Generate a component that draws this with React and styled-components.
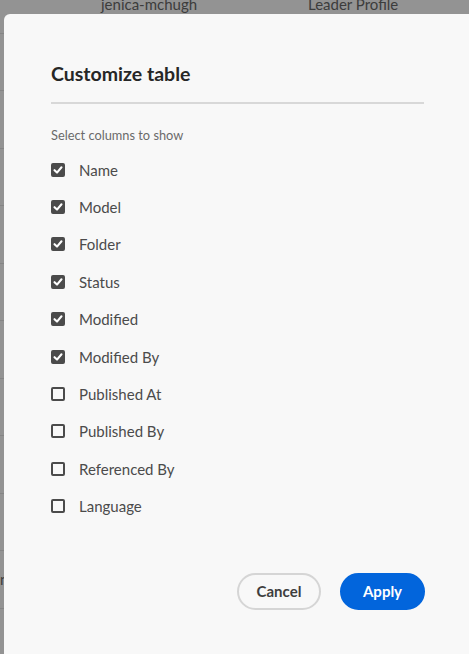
import React from "react";
import styled, { createGlobalStyle } from "styled-components";

const Global = createGlobalStyle`
  html, body { margin: 0; padding: 0; }
  body {
    width: 469px;
    height: 654px;
    overflow: hidden;
    background: #929292;
    font-family: Lato, "Open Sans", sans-serif;
  }
`;

const Page = styled.div`
  position: relative;
  width: 469px;
  height: 654px;
  overflow: hidden;
  background: #939393;
`;

const BackTable = styled.div`
  display: flex;
  flex-direction: column;
  margin-top: -24px;
`;

const BackRow = styled.div`
  height: 57.5px;
  box-sizing: border-box;
  border-bottom: 1px solid #858585;
  display: flex;
  align-items: center;
  font-size: 15px;
  color: #3c3c3c;
`;

const BackCell = styled.span`
  width: ${(p) => p.$w}px;
  flex: none;
  white-space: nowrap;
`;

const Dialog = styled.section`
  position: absolute;
  left: 4px;
  top: 14px;
  width: 468px;
  height: 660px;
  box-sizing: border-box;
  background: #f8f8f8;
  border-radius: 6px 0 0 0;
  padding: 47px 47px 0 47px;
  display: flex;
  flex-direction: column;
`;

const Title = styled.h2`
  margin: 0;
  font-size: 19.5px;
  font-weight: 700;
  color: #262626;
  line-height: 26px;
`;

const Divider = styled.hr`
  margin: 15px 1px 0 0;
  border: none;
  height: 2px;
  background: #d8d8d8;
`;

const Label = styled.div`
  margin-top: 23px;
  font-size: 12.8px;
  color: #6a6a6a;
  line-height: 16px;
`;

const List = styled.div`
  margin-top: 8px;
  display: flex;
  flex-direction: column;
`;

const Row = styled.label`
  height: 37.4px;
  display: flex;
  align-items: center;
  gap: 14px;
  font-size: 15px;
  color: #4b4b4b;
`;

const Box = styled.span`
  width: 14px;
  height: 14px;
  box-sizing: border-box;
  border-radius: 2px;
  border: 2px solid #4b4b4b;
  background: ${(p) => (p.$on ? "#4b4b4b" : "transparent")};
  display: flex;
  align-items: center;
  justify-content: center;
  flex: none;
`;

const Footer = styled.div`
  margin-top: 48px;
  display: flex;
  justify-content: flex-end;
  gap: 19px;
`;

const Button = styled.button`
  height: 37px;
  min-width: ${(p) => p.$w}px;
  border-radius: 19px;
  box-sizing: border-box;
  font-family: Lato, "Open Sans", sans-serif;
  font-size: 15px;
  font-weight: 700;
  padding: 0 14px;
  border: 2px solid ${(p) => (p.$primary ? "#0265dc" : "#d5d5d5")};
  background: ${(p) => (p.$primary ? "#0265dc" : "transparent")};
  color: ${(p) => (p.$primary ? "#ffffff" : "#3e3e3e")};
`;

const columns = [
  ["Name", true],
  ["Model", true],
  ["Folder", true],
  ["Status", true],
  ["Modified", true],
  ["Modified By", true],
  ["Published At", false],
  ["Published By", false],
  ["Referenced By", false],
  ["Language", false],
];

const Check = () => (
  <svg width="10" height="10" viewBox="0 0 10 10">
    <path d="M1.5 5.2 L4 7.6 L8.5 2.3" fill="none" stroke="#fff" strokeWidth="2.1" strokeLinecap="round" strokeLinejoin="round" />
  </svg>
);

export default function App() {
  const rows = Array.from({ length: 13 });
  return (
    <>
      <Global />
      <Page>
        <BackTable>
          {rows.map((_, i) => (
            <BackRow key={i}>
              <BackCell $w={4}>{i === 10 ? "n" : ""}</BackCell>
              <BackCell $w={97} />
              {i === 0 ? (
                <>
                  <BackCell $w={207}>jenica-mchugh</BackCell>
                  <BackCell $w={150}>Leader Profile</BackCell>
                </>
              ) : null}
            </BackRow>
          ))}
        </BackTable>
        <Dialog role="dialog" aria-label="Customize table">
          <Title>Customize table</Title>
          <Divider />
          <Label>Select columns to show</Label>
          <List>
            {columns.map(([name, on]) => (
              <Row key={name}>
                <Box $on={on}>{on ? <Check /> : null}</Box>
                {name}
              </Row>
            ))}
          </List>
          <Footer>
            <Button $w={84}>Cancel</Button>
            <Button $primary $w={85}>Apply</Button>
          </Footer>
        </Dialog>
      </Page>
    </>
  );
}
